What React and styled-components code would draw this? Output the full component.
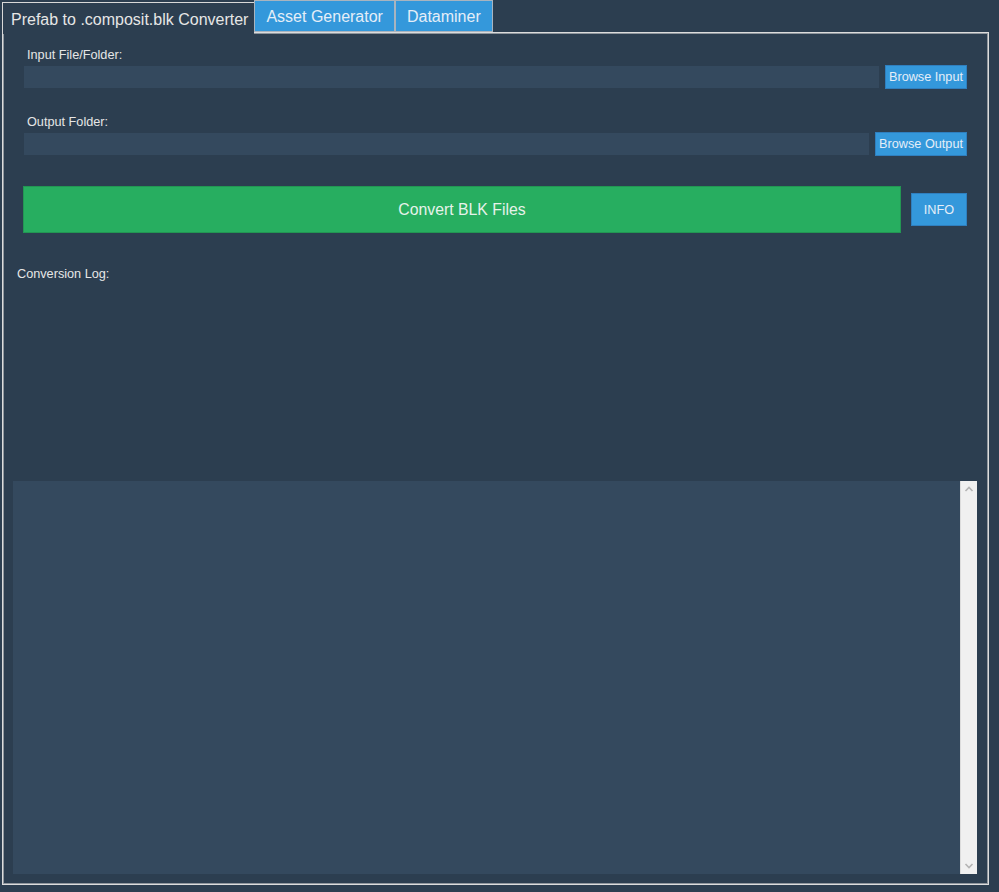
import React from "react";
import styled, { createGlobalStyle } from "styled-components";

const Global = createGlobalStyle`
  html, body {
    margin: 0;
    background: #2c3e50;
    font-family: "Liberation Sans", Arial, sans-serif;
  }
`;

const App = () => {
  return (
    <Page>
      <Global />
      <TabBar>
        <Tab active>Prefab to .composit.blk Converter</Tab>
        <Tab>Asset Generator</Tab>
        <Tab>Dataminer</Tab>
      </TabBar>
      <Panel>
        <Form>
          <Label>Input File/Folder:</Label>
          <FieldRow>
            <Field />
            <SmallButton>Browse Input</SmallButton>
          </FieldRow>
          <Label second>Output Folder:</Label>
          <FieldRow>
            <Field />
            <SmallButton>Browse Output</SmallButton>
          </FieldRow>
          <ActionRow>
            <ConvertButton>Convert BLK Files</ConvertButton>
            <InfoButton>INFO</InfoButton>
          </ActionRow>
        </Form>
        <LogLabel>Conversion Log:</LogLabel>
        <LogBox>
          <LogText />
          <Scrollbar>
            <svg width="16" height="16" viewBox="0 0 16 16">
              <polyline points="4.5,10 8,6.5 11.5,10" fill="none" stroke="#b4b4b4" strokeWidth="1.6" />
            </svg>
            <svg width="16" height="16" viewBox="0 0 16 16">
              <polyline points="4.5,6 8,9.5 11.5,6" fill="none" stroke="#b4b4b4" strokeWidth="1.6" />
            </svg>
          </Scrollbar>
        </LogBox>
      </Panel>
    </Page>
  );
};

export default App;

const Page = styled.div`
  padding: 0 0 0 2px;
  width: 987px;
`;

const TabBar = styled.div`
  display: flex;
  align-items: flex-end;
  height: 32px;
`;

const Tab = styled.div`
  box-sizing: border-box;
  height: 32px;
  padding: ${(p) => (p.active ? "7px 6px 0 8px" : "6px 11px 0 11px")};
  font-size: 16px;
  line-height: 20px;
  color: ${(p) => (p.active ? "#e6e6e6" : "#e4eef8")};
  background: ${(p) => (p.active ? "#2c3e50" : "#3498db")};
  border: 1px solid ${(p) => (p.active ? "#d8d8d8" : "#a9b4bf")};
  border-bottom: ${(p) => (p.active ? "none" : "1px solid #a9b4bf")};
  border-right: ${(p) => (p.active ? "none" : "1px solid #a9b4bf")};
  margin-top: ${(p) => (p.active ? "2px" : "0")};
  margin-bottom: ${(p) => (p.active ? "-2px" : "0")};
  position: relative;
  z-index: ${(p) => (p.active ? 2 : 1)};
  white-space: nowrap;
`;

const Panel = styled.div`
  box-sizing: border-box;
  width: 987px;
  height: 853px;
  border: 1px solid #dcdcdc;
  box-shadow: inset 0 0 0 1px #8f969d;
  display: flex;
  flex-direction: column;
  padding: 2px;
`;

const Form = styled.div`
  display: flex;
  flex-direction: column;
  padding: 13px 19px 0 18px;
`;

const Label = styled.div`
  font-size: 12.7px;
  line-height: 14px;
  color: #e6e6e6;
  padding-left: 4px;
  margin-top: ${(p) => (p.second ? "26px" : "0")};
`;

const FieldRow = styled.div`
  display: flex;
  align-items: center;
  gap: 6px;
  height: 24px;
  margin-top: 3px;
  padding-left: 1px;
`;

const Field = styled.div`
  flex: 1;
  height: 22px;
  background: #34495e;
`;

const SmallButton = styled.div`
  box-sizing: border-box;
  height: 24px;
  padding: 0 3px;
  display: flex;
  align-items: center;
  background: #3498db;
  border: 1px solid #2f7fbf;
  color: #e4eef8;
  font-size: 12.7px;
  white-space: nowrap;
`;

const ActionRow = styled.div`
  display: flex;
  align-items: center;
  gap: 10px;
  margin-top: 30px;
  height: 47px;
`;

const ConvertButton = styled.div`
  box-sizing: border-box;
  flex: 1;
  height: 47px;
  display: flex;
  align-items: center;
  justify-content: center;
  background: #27ae60;
  border: 1px solid #239653;
  color: #e6f2ea;
  font-size: 15.8px;
`;

const InfoButton = styled.div`
  box-sizing: border-box;
  width: 56px;
  height: 33px;
  display: flex;
  align-items: center;
  justify-content: center;
  background: #3498db;
  border: 1px solid #2f7fbf;
  color: #e4eef8;
  font-size: 12.7px;
`;

const LogLabel = styled.div`
  font-size: 12.7px;
  line-height: 14px;
  color: #e6e6e6;
  margin: 34px 0 0 12px;
`;

const LogBox = styled.div`
  display: flex;
  margin: 200px 9px 8px 8px;
  flex: 1;
`;

const LogText = styled.div`
  flex: 1;
  background: #34495e;
`;

const Scrollbar = styled.div`
  width: 16px;
  background: #f0f0f0;
  border-left: 1px solid #dcdcdc;
  display: flex;
  flex-direction: column;
  justify-content: space-between;
`;
